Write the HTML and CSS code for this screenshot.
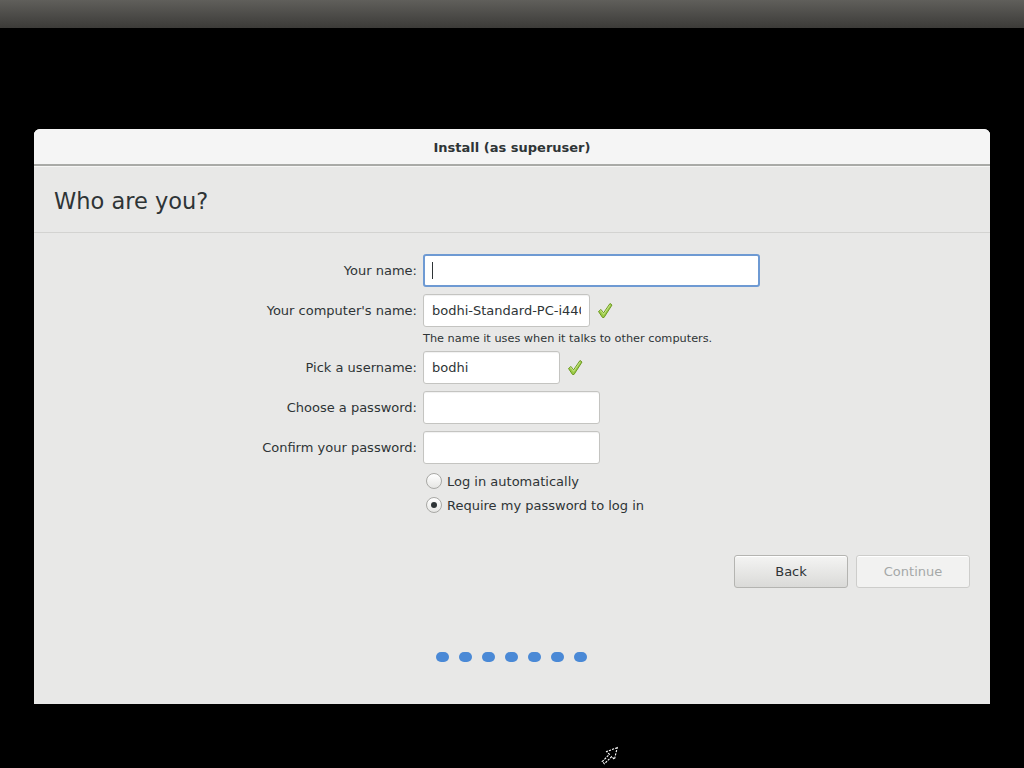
FILE: index.html
```html
<!DOCTYPE html>
<html lang="en">
<head>
    <meta charset="UTF-8">
    <title>Install (as superuser)</title>
    <link rel="stylesheet" href="styles.css">
</head>
<body>
    <div class="top-panel"></div>

    <div class="window">
        <div class="titlebar">Install (as superuser)</div>
        <div class="page-header">
            <h1>Who are you?</h1>
        </div>

        <div class="content">
            <div class="form">
                <label class="label" for="realname">Your name:</label>
                <div class="field">
                    <input id="realname" class="entry entry-wide focused" type="text" value="">
                    <span class="caret"></span>
                </div>

                <label class="label" for="hostname">Your computer's name:</label>
                <div class="field">
                    <input id="hostname" class="entry entry-host" type="text" value="bodhi-Standard-PC-i440FX-PIIX-1996">
                    <svg class="check" width="18" height="18" viewBox="0 0 18 18">
                        <path d="M2.5 9.5 L5 7.5 L7.5 11 L14 1.5 L16 3 L8 15.5 L6.5 15.5 Z" fill="#9ccb47" stroke="#6d9a22" stroke-width="1" stroke-linejoin="round"/>
                        <path d="M4 9.3 L5 8.6 L7.6 12.3 L14.2 2.8" fill="none" stroke="#c7e58c" stroke-width="1"/>
                    </svg>
                </div>

                <div></div>
                <div class="hint">The name it uses when it talks to other computers.</div>

                <label class="label" for="username">Pick a username:</label>
                <div class="field">
                    <input id="username" class="entry entry-user" type="text" value="bodhi">
                    <svg class="check" width="18" height="18" viewBox="0 0 18 18">
                        <path d="M2.5 9.5 L5 7.5 L7.5 11 L14 1.5 L16 3 L8 15.5 L6.5 15.5 Z" fill="#9ccb47" stroke="#6d9a22" stroke-width="1" stroke-linejoin="round"/>
                        <path d="M4 9.3 L5 8.6 L7.6 12.3 L14.2 2.8" fill="none" stroke="#c7e58c" stroke-width="1"/>
                    </svg>
                </div>

                <label class="label" for="password">Choose a password:</label>
                <div class="field">
                    <input id="password" class="entry entry-pass" type="password" value="">
                </div>

                <label class="label" for="verified">Confirm your password:</label>
                <div class="field">
                    <input id="verified" class="entry entry-pass" type="password" value="">
                </div>

                <div></div>
                <div class="radios">
                    <label class="radio-row">
                        <input class="radio" type="radio" name="login">
                        Log in automatically
                    </label>
                    <label class="radio-row">
                        <input class="radio" type="radio" name="login" checked>
                        Require my password to log in
                    </label>
                </div>
            </div>

            <div class="buttons">
                <button class="btn">Back</button>
                <button class="btn" disabled>Continue</button>
            </div>

            <div class="dots">
                <span class="dot"></span>
                <span class="dot"></span>
                <span class="dot"></span>
                <span class="dot"></span>
                <span class="dot"></span>
                <span class="dot"></span>
                <span class="dot"></span>
            </div>
        </div>
    </div>

    <!-- mouse pointer -->
    <svg class="pointer" width="20" height="20" viewBox="0 0 18 18">
        <path d="M15.5 1.5 L6 5 L8.5 7.5 L2 14 L4 16 L10.5 9.5 L13 12 Z" fill="#000" stroke="#fff" stroke-width="1" stroke-dasharray="2 1"/>
    </svg>
</body>
</html>
```

FILE: styles.css
```css
body {
    margin: 0;
    background-color: #000;
    font-family: "DejaVu Sans", Verdana, sans-serif;
    font-size: 13px;
    color: #2e3436;
    width: 1024px;
    height: 768px;
    overflow: hidden;
    position: relative;
}
.top-panel {
    height: 28px;
    background: linear-gradient(#605f5b, #4a4946 60%, #3c3b38);
}
.window {
    margin: 101px 0 0 34px;
    width: 956px;
    height: 575px;
    display: flex;
    flex-direction: column;
    background-color: #e8e8e7;
    border-radius: 6px 6px 0 0;
    overflow: hidden;
}
.titlebar {
    height: 35px;
    line-height: 37px;
    text-align: center;
    font-weight: bold;
    font-size: 13px;
    background-color: #f5f5f5;
    border-bottom: 2px solid #a9aaa7;
    box-shadow: 0 1px 0 #f6f6f5;
}
.page-header {
    height: 66px;
    border-bottom: 1px solid #d3d3d1;
    display: flex;
    align-items: center;
    padding-left: 20px;
}
h1 {
    margin: 3px 0 0 0;
    font-size: 22.5px;
    font-weight: normal;
    color: #2e3436;
}
.content {
    flex: 1;
    display: flex;
    flex-direction: column;
    padding-top: 21px;
}
.form {
    display: grid;
    grid-template-columns: 383px auto;
    column-gap: 7px;
    row-gap: 7px;
    align-items: center;
}
.label {
    text-align: right;
    color: #2e3436;
}
.field {
    display: flex;
    align-items: center;
    position: relative;
    margin-left: -1px;
}
.entry {
    box-sizing: border-box;
    height: 33px;
    padding: 0 8px;
    font-family: "DejaVu Sans", Verdana, sans-serif;
    font-size: 13px;
    color: #2e3436;
    background-color: #fff;
    border: 1px solid #c4c4c1;
    border-radius: 3px;
    box-shadow: inset 0 1px 1px rgba(0, 0, 0, 0.06);
    outline: none;
    margin: 0;
}
.entry.focused {
    border: 2px solid #6e9ad3;
    box-shadow: none;
}
.entry-wide {
    width: 337px;
}
.entry-host {
    width: 167px;
}
.entry-user {
    width: 137px;
}
.entry-pass {
    width: 177px;
}
.caret {
    position: absolute;
    left: 9px;
    top: 8px;
    width: 1px;
    height: 17px;
    background-color: #2e3436;
}
.check {
    margin-left: 6px;
    margin-top: 1px;
}
.hint {
    font-size: 11.3px;
    line-height: 13px;
    margin-top: -2px;
    margin-bottom: -1px;
    margin-left: -1px;
    color: #2e3436;
}
.radios {
    display: flex;
    flex-direction: column;
    padding-left: 1px;
    margin-top: -2px;
}
.radio-row {
    display: flex;
    align-items: center;
    height: 24px;
}
.radio {
    appearance: none;
    -webkit-appearance: none;
    box-sizing: border-box;
    width: 16px;
    height: 16px;
    margin: 0 5px 0 1px;
    border: 1px solid #a8a8a5;
    border-radius: 50%;
    background: linear-gradient(#ffffff, #e6e6e4);
    display: flex;
    align-items: center;
    justify-content: center;
}
.radio:checked::after {
    content: "";
    width: 6px;
    height: 6px;
    border-radius: 50%;
    background-color: #2e3436;
}
.buttons {
    display: flex;
    justify-content: flex-end;
    gap: 8px;
    padding-right: 20px;
    margin-top: 38px;
}
.btn {
    box-sizing: border-box;
    width: 114px;
    height: 33px;
    font-family: "DejaVu Sans", Verdana, sans-serif;
    font-size: 13px;
    color: #2e3436;
    background: linear-gradient(#f4f4f3, #dadad8);
    border: 1px solid #b4b4b1;
    border-radius: 3px;
    box-shadow: inset 0 1px 0 #fff;
}
.btn:disabled {
    color: #a5a8a8;
    background: #f2f2f1;
    border-color: #cdcdcb;
}
.dots {
    display: flex;
    gap: 10px;
    padding-left: 402px;
    margin-top: 64px;
}
.dot {
    width: 13px;
    height: 10px;
    border-radius: 5px;
    background-color: #4a89d6;
}
.pointer {
    position: absolute;
    left: 600px;
    top: 746px;
}
```
